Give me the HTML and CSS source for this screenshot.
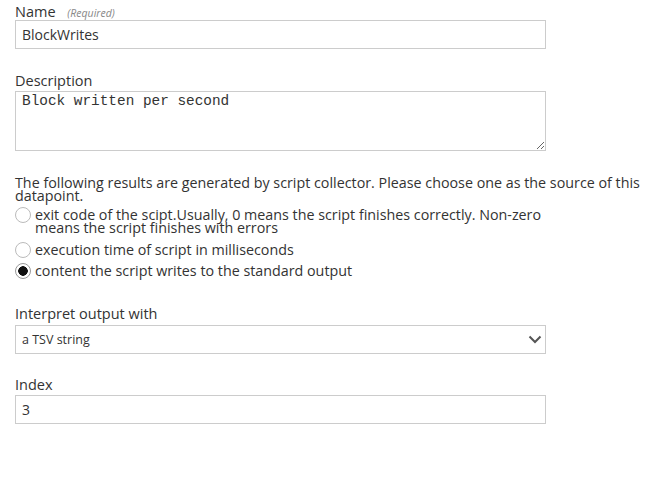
FILE: index.html
```html
<!DOCTYPE html>
<html lang="en">
<head>
    <meta charset="UTF-8">
    <title>Datapoint</title>
    <link rel="stylesheet" href="styles.css">
</head>
<body>
    <form class="dp-form">
        <div class="field field_name">
            <label class="field_label">Name <em class="required">(Required)</em></label>
            <input class="text_input" type="text" value="BlockWrites">
        </div>
        <div class="field">
            <label class="field_label">Description</label>
            <textarea class="text_area">Block written per second</textarea>
        </div>
        <div class="field field_source">
            <p class="hint">The following results are generated by script collector. Please choose one as the source of this datapoint.</p>
            <ul class="radios">
                <li>
                    <label class="radio">
                        <input type="radio" name="source">
                        <span>exit code of the scipt.Usually, 0 means the script finishes correctly. Non-zero means the script finishes with errors</span>
                    </label>
                </li>
                <li>
                    <label class="radio">
                        <input type="radio" name="source">
                        <span>execution time of script in milliseconds</span>
                    </label>
                </li>
                <li>
                    <label class="radio">
                        <input type="radio" name="source" checked>
                        <span>content the script writes to the standard output</span>
                    </label>
                </li>
            </ul>
        </div>
        <div class="field field_select">
            <label class="field_label">Interpret output with</label>
            <div class="select_wrap">
                <select class="select">
                    <option>a TSV string</option>
                </select>
                <svg class="chevron" width="14" height="9" viewBox="0 0 14 9">
                    <path d="M1.5 1.5 L7 7 L12.5 1.5" fill="none" stroke="#555" stroke-width="2"/>
                </svg>
            </div>
        </div>
        <div class="field">
            <label class="field_label">Index</label>
            <input class="text_input" type="text" value="3">
        </div>
    </form>
</body>
</html>
```

FILE: styles.css
```css
*{
    margin:0;
    padding:0;
    box-sizing: border-box;
}
body{
    font-family: "Open Sans", "Liberation Sans", sans-serif;
    color: #333;
    background: #fff;
}
li{
    list-style: none;
}
.dp-form{
    padding: 4px 15px 0 15px;
}
.field{
    margin-bottom: 23px;
}
.field_name{
    margin-bottom: 24px;
}
.field_source{
    margin-top: 25px;
    margin-bottom: 27px;
}
.field_label{
    display: block;
    height: 16px;
    font-size: 14.5px;
    line-height: 16px;
    margin-bottom: 2px;
    color: #333;
}
.field_name .field_label{
    margin-bottom: 0;
}
.field_select .field_label{
    margin-bottom: 3px;
}
.required{
    font-size: 10.5px;
    line-height: 1;
    color: #888;
    margin-left: 8px;
}
.text_input,
.select{
    display: block;
    width: 531px;
    height: 29px;
    border: 1px solid #ccc;
    padding: 0 6px;
    font-family: inherit;
    font-size: 14px;
    color: #333;
    background: #fff;
    outline: none;
}
.text_area{
    display: block;
    width: 531px;
    height: 60px;
    border: 1px solid #ccc;
    padding: 1px 6px;
    font-family: "Liberation Mono", monospace;
    font-size: 14.4px;
    line-height: 17px;
    color: #333;
}
.hint{
    font-size: 14.3px;
    line-height: 13px;
    margin-bottom: 5px;
}
.radios li{
    margin-bottom: 5px;
}
.radios li:first-child{
    margin-bottom: 6px;
}
.radio{
    display: flex;
    align-items: flex-start;
    font-size: 14.3px;
    width: 540px;
}
.radio span{
    line-height: 13px;
    margin-top: 1px;
    padding-bottom: 2px;
}
.radio input{
    appearance: none;
    -webkit-appearance: none;
    width: 16px;
    height: 16px;
    margin: 0 4px 0 0;
    border: 1px solid #bbb;
    border-radius: 50%;
    background: #fff;
    flex: none;
}
.radio input:checked{
    background: radial-gradient(circle, #111 0, #111 4.5px, #fff 5px);
    border-color: #999;
}
.select_wrap{
    position: relative;
    width: 531px;
}
.select{
    appearance: none;
    -webkit-appearance: none;
    font-size: 12.5px;
}
.chevron{
    position: absolute;
    right: 4px;
    top: 10px;
    pointer-events: none;
}
```
